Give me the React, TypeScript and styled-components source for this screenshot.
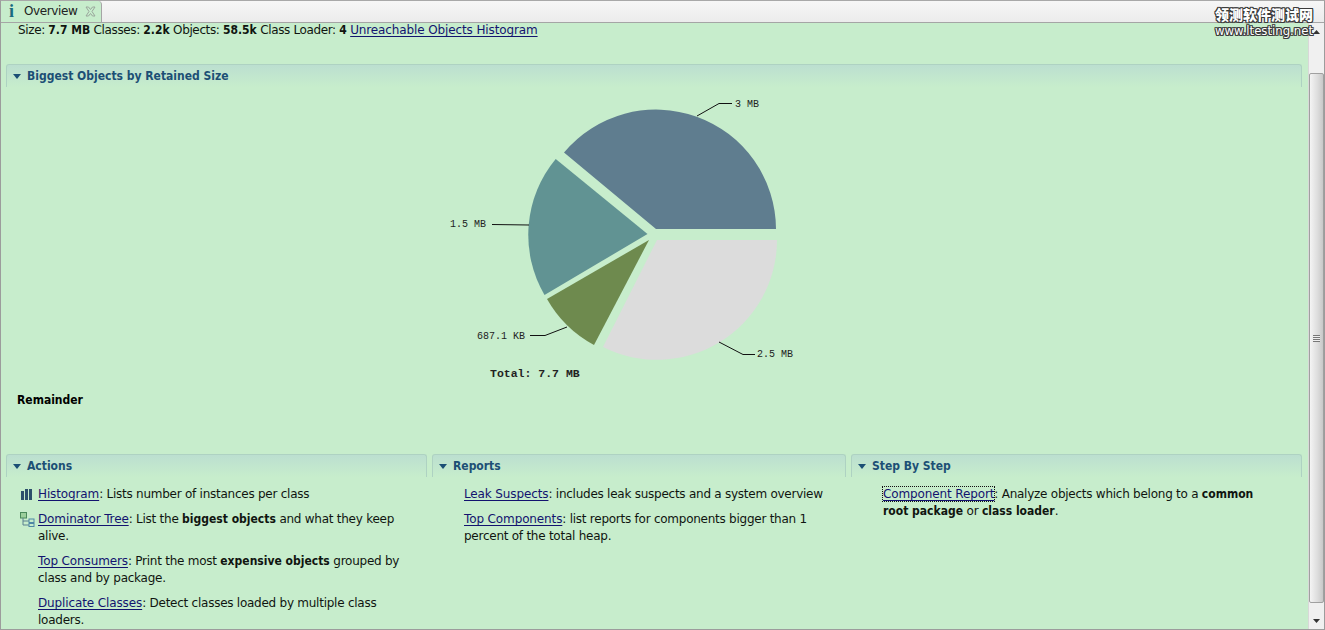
import React from "react";
import styled, { createGlobalStyle } from "styled-components";

const Global = createGlobalStyle`
  html, body { margin: 0; padding: 0; background: #c7edcc; }
  body { font-family: "DejaVu Sans", sans-serif; font-size: 12px; color: #101510; }
  b { font-family: "DejaVu Sans Condensed", "DejaVu Sans", sans-serif; font-stretch: condensed; font-weight: 700; letter-spacing: 0; }
`;

const Window = styled.div`
  position: relative;
  width: 1325px;
  height: 630px;
  box-sizing: border-box;
  display: flex;
  flex-direction: column;
  overflow: hidden;
  border: 1px solid #9c9c9c;
  border-top-color: #a8a8a8;
  background: #c7edcc;
`;

const TabBar = styled.div`
  flex: 0 0 21px;
  display: flex;
  background: linear-gradient(#f6f6f6, #ececec);
  border-bottom: 1px solid #a5a5a5;
  box-sizing: border-box;
`;

const Tab = styled.div`
  width: 101px;
  height: 21px;
  box-sizing: border-box;
  display: flex;
  align-items: center;
  padding: 0 0 1px 8px;
  background: #c7edcc;
  border-right: 1px solid #a5a5a5;
  border-radius: 0 4px 0 0;
  color: #222;
  font-size: 12px;
  letter-spacing: -0.4px;
`;

const InfoMark = styled.span`
  font-family: "Liberation Serif", serif;
  font-weight: 700;
  font-size: 18px;
  color: #1a6a80;
  width: 15px;
`;

const TabClose = styled.svg`
  width: 11px;
  height: 11px;
  margin-left: 8px;
`;

const Body = styled.div`
  flex: 1;
  display: flex;
  min-height: 0;
`;

const Content = styled.div`
  flex: 1;
  min-width: 0;
  padding-right: 6px;
  display: flex;
  flex-direction: column;
`;

const Summary = styled.div`
  height: 15px;
  line-height: 15px;
  padding-left: 17px;
  white-space: nowrap;
  letter-spacing: -0.37px;
`;

const Link = styled.a`
  color: #13136f;
  text-decoration: underline;
  text-underline-offset: 2px;
  letter-spacing: -0.12px;
`;

const FocusLink = styled(Link)`
  outline: 1px dotted #111;
  outline-offset: 0;
`;

const Section = styled.section`
  min-width: 0;
`;

const SectionHeader = styled.div`
  height: 23px;
  box-sizing: border-box;
  display: flex;
  align-items: center;
  padding: 0 0 0 6px;
  border: 1px solid #aed2c2;
  border-bottom: none;
  border-radius: 3px 3px 0 0;
  background: linear-gradient(#bcdfd0, #c7edcc);
  color: #1c4f75;
  font-family: "DejaVu Sans Condensed", "DejaVu Sans", sans-serif;
  font-stretch: condensed;
  font-weight: 700;
  font-size: 12px;
`;

const Caret = styled.span`
  width: 0;
  height: 0;
  border-left: 4.5px solid transparent;
  border-right: 4.5px solid transparent;
  border-top: 5px solid #1c4f75;
  margin-right: 6px;
`;

const TopSection = styled(Section)`
  margin: 26px 0 0 5px;
`;

const ChartWrap = styled.div`
  height: 305px;
`;

const ChartText = styled.text<{ $bold?: boolean }>`
  font-family: "Liberation Mono", monospace;
  font-size: ${(p) => (p.$bold ? "11.5px" : "10px")};
  font-weight: ${(p) => (p.$bold ? 700 : 400)};
  fill: #222;
`;

const Remainder = styled.div`
  font-family: "DejaVu Sans Condensed", "DejaVu Sans", sans-serif;
  font-stretch: condensed;
  font-weight: 700;
  padding-left: 11px;
  height: 62px;
  line-height: 16px;
  color: #000;
`;

const Columns = styled.div`
  display: grid;
  grid-template-columns: 421px 414px 451px;
  gap: 5px;
  margin-left: 5px;
`;

const List = styled.div<{ $right: number }>`
  padding: 9px ${(p) => p.$right}px 0 32px;
  display: flex;
  flex-direction: column;
  gap: 8px;
`;

const Entry = styled.p`
  position: relative;
  margin: 0;
  line-height: 17px;
  letter-spacing: -0.25px;
`;

const EntryIcon = styled.svg`
  position: absolute;
  left: -19px;
  top: 0;
  width: 16px;
  height: 16px;
`;

const Scrollbar = styled.div`
  flex: 0 0 16px;
  display: flex;
  flex-direction: column;
  background: #f0f0f0;
  border-left: 1px solid #d8d8d8;
  box-sizing: border-box;
  align-items: stretch;
`;

const ScrollArrow = styled.div`
  flex: 0 0 17px;
  display: flex;
  align-items: center;
  justify-content: center;
`;

const ScrollThumb = styled.div`
  flex: 0 0 528px;
  margin-top: 33px;
  display: flex;
  align-items: center;
  justify-content: center;
  border: 1px solid #a0a0a0;
  border-radius: 2px;
  background: linear-gradient(90deg, #f4f4f4, #dcdcdc 60%, #c8c8c8);
`;

const Grip = styled.div`
  width: 7px;
  height: 7px;
  background: repeating-linear-gradient(#777 0 1px, #eee 1px 2px);
`;

const ScrollSpacer = styled.div`
  flex: 1;
`;

const Watermark = styled.div`
  position: absolute;
  right: 11px;
  top: 5px;
  display: flex;
  flex-direction: column;
  align-items: center;
  color: #fff;
  font-weight: 700;
  text-shadow:
    -1px -1px 0 #3b3b3b, 1px -1px 0 #3b3b3b, -1px 1px 0 #3b3b3b, 1px 1px 0 #3b3b3b,
    0 -1px 0 #3b3b3b, 0 1px 0 #3b3b3b, -1px 0 0 #3b3b3b, 1px 0 0 #3b3b3b;
`;

const WatermarkCn = styled.div`
  font-family: "Noto Sans CJK SC", sans-serif;
  font-size: 14px;
  font-weight: 900;
  line-height: 16px;
`;

const WatermarkEn = styled.div`
  font-family: "DejaVu Sans", sans-serif;
  font-weight: 400;
  font-size: 11.7px;
  line-height: 15px;
  margin-top: 2px;
`;

const PieSvg = styled.svg`
  display: block;
`;

const Pie = () => (
  <PieSvg width="1295" height="305" viewBox="0 0 1295 305">
    <g transform="translate(-6 -87)">
      <path d="M656 229 L564 152.500 A120 120 0 0 1 776 229 Z" fill="#5f7d8f" />
      <path d="M647.5 234 L555.7 159 A119 119 0 0 0 544.5 295 Z" fill="#619393" />
      <path d="M649 240 L547 299 A118.500 118.500 0 0 0 594 345 Z" fill="#6e8a4e" />
      <path d="M657 240 L777 240 A120 120 0 0 1 603 347 Z" fill="#dcdcdc" />
      <g fill="none" stroke="#111" strokeWidth="1">
        <polyline points="697,116 719,103.500 732,103.500" />
        <polyline points="529,225 492,224.500" />
        <polyline points="567,327 545,335.500 530,335.500" />
        <polyline points="719,342 743,354.500 755,354.500" />
      </g>
      <ChartText x={735} y={107}>3 MB</ChartText>
      <ChartText x={450} y={227}>1.5 MB</ChartText>
      <ChartText x={477} y={339}>687.1 KB</ChartText>
      <ChartText x={757} y={357}>2.5 MB</ChartText>
      <ChartText $bold x={490} y={377}>Total: 7.7 MB</ChartText>
    </g>
  </PieSvg>
);

export default function App() {
  return (
    <>
      <Global />
      <Window>
        <TabBar>
          <Tab>
            <InfoMark>i</InfoMark>
            Overview
            <TabClose viewBox="0 0 11 11">
              <path d="M1 1h2.500L5.500 3.500 7.500 1H10L7 5.500 10 10H7.500L5.500 7.500 3.500 10H1L4 5.500Z" fill="none" stroke="#9aa69c" strokeWidth="1" />
            </TabClose>
          </Tab>
        </TabBar>
        <Body>
          <Content>
            <Summary>
              Size: <b>7.7 MB</b> Classes: <b>2.2k</b> Objects: <b>58.5k</b> Class Loader: <b>4</b> <Link>Unreachable Objects Histogram</Link>
            </Summary>
            <TopSection>
              <SectionHeader><Caret />Biggest Objects by Retained Size</SectionHeader>
              <ChartWrap><Pie /></ChartWrap>
              <Remainder>Remainder</Remainder>
            </TopSection>
            <Columns>
              <Section>
                <SectionHeader><Caret />Actions</SectionHeader>
                <List $right={6}>
                  <Entry>
                    <EntryIcon viewBox="0 0 16 16">
                      <path d="M2 5h3v9H2zM6 3h3v11H6zM10 3h3v11h-3z" fill="#2c4f6b" />
                    </EntryIcon>
                    <Link>Histogram</Link>: Lists number of instances per class
                  </Entry>
                  <Entry>
                    <EntryIcon viewBox="0 0 16 16">
                      <rect x="1.500" y="1.500" width="6" height="5.500" fill="#9ccf9c" stroke="#4a8a5a" />
                      <path d="M4 7v7h6M4 10h6" fill="none" stroke="#5a8090" />
                      <rect x="10" y="8" width="5" height="3.500" fill="#c7edcc" stroke="#4f87a5" />
                      <rect x="10" y="12.500" width="5" height="3" fill="#c7edcc" stroke="#4f87a5" />
                    </EntryIcon>
                    <Link>Dominator Tree</Link>: List the <b>biggest objects</b> and what they keep alive.
                  </Entry>
                  <Entry>
                    <Link>Top Consumers</Link>: Print the most <b>expensive objects</b> grouped by class and by package.
                  </Entry>
                  <Entry>
                    <Link>Duplicate Classes</Link>: Detect classes loaded by multiple class loaders.
                  </Entry>
                </List>
              </Section>
              <Section>
                <SectionHeader><Caret />Reports</SectionHeader>
                <List $right={6}>
                  <Entry><Link>Leak Suspects</Link>: includes leak suspects and a system overview</Entry>
                  <Entry><Link>Top Components</Link>: list reports for components bigger than 1 percent of the total heap.</Entry>
                </List>
              </Section>
              <Section>
                <SectionHeader><Caret />Step By Step</SectionHeader>
                <List $right={30}>
                  <Entry>
                    <FocusLink>Component Report</FocusLink>: Analyze objects which belong to a <b>common root package</b> or <b>class loader</b>.
                  </Entry>
                </List>
              </Section>
            </Columns>
          </Content>
          <Scrollbar>
            <ScrollArrow>
              <svg width="7" height="4"><path d="M0 4L3.500 0 7 4Z" fill="#333" /></svg>
            </ScrollArrow>
            <ScrollThumb><Grip /></ScrollThumb>
            <ScrollSpacer />
            <ScrollArrow>
              <svg width="7" height="4"><path d="M0 0L3.500 4 7 0Z" fill="#333" /></svg>
            </ScrollArrow>
          </Scrollbar>
        </Body>
        <Watermark>
          <WatermarkCn>领测软件测试网</WatermarkCn>
          <WatermarkEn>www.ltesting.net</WatermarkEn>
        </Watermark>
      </Window>
    </>
  );
}
